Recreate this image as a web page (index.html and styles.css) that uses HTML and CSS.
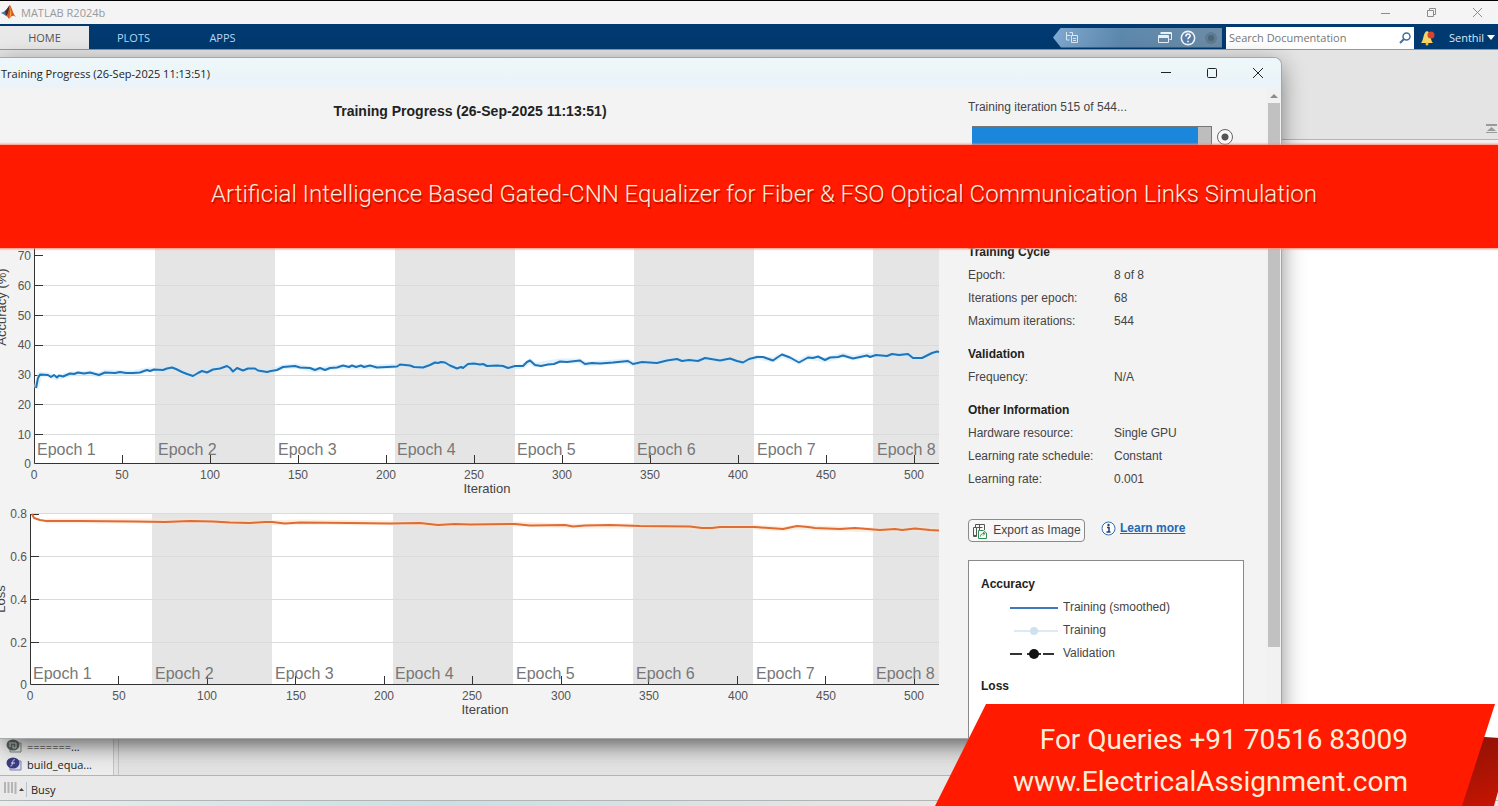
FILE: index.html
```
<!DOCTYPE html>
<html lang="en">
<head>
	<meta charset="utf-8">
	<title>MATLAB R2024b</title>
	<link rel="stylesheet" href="styles.css">
</head>
<body>
	<header class="app-title">
		<svg class="logo" width="15" height="14" viewBox="0 0 15 14">
			<path d="M0 8 L4 6 L7 3 L8 8 L5 11 L3 9.500 Z" fill="#3d7aa8"/>
			<path d="M4 6 C6 5 7 1 9 0 L7 9 L5 11 Z" fill="#5b2a1c"/>
			<path d="M9 0 C11 3 12 9 15 12 C12 10 11 10 8 14 C7 12 6 11 5 11 C8 9 8 3 9 0 Z" fill="#d9531e"/>
			<path d="M9 1 C10 5 9 9 8 13 L10 11 C11 8 10 4 9 1 Z" fill="#f4a73a"/>
		</svg>
		<span class="app-name">MATLAB R2024b</span>
		<div class="win-buttons faded">
			<button aria-label="Minimize"><svg width="12" height="12"><path d="M1 6.500h9"/></svg></button>
			<button aria-label="Restore"><svg width="12" height="12"><path d="M1.500 3.500h6v6h-6zM3.500 3.500v-2h6v6h-2"/></svg></button>
			<button aria-label="Close"><svg width="12" height="12"><path d="M1 1l9 9M10 1l-9 9"/></svg></button>
		</div>
	</header>

	<nav class="toolstrip">
		<a class="tab active" href="#home">HOME</a>
		<a class="tab" href="#plots">PLOTS</a>
		<a class="tab" href="#apps">APPS</a>
		<div class="quick">
			<svg width="14" height="14" viewBox="0 0 14 14" fill="none" stroke="#dbe6ee"><path d="M1.500 1v8h3M1.500 4.500h4M4.500 1.500h3v3M6.500 4.500h6v7h-6zM8 7.500h3M8 9.500h3"/></svg>
			<svg class="push" width="15" height="14" viewBox="0 0 15 14" fill="none" stroke="#e8eff5"><path d="M3.500 1.500h11v7h-2M3.500 2.500h11M1.500 4.500h10v7h-10z"/><path d="M2 6h9" stroke-width="2"/></svg>
			<svg width="16" height="16" viewBox="0 0 15 15"><circle cx="7.500" cy="7.500" r="7" fill="#eef3f8"/><circle cx="7.500" cy="7.500" r="5.500" fill="#5a7fa8"/><path d="M5.500 6c0-3 4-3 4-.5c0 1.500-2 1.500-2 3.200M7.500 10v1.500" fill="none" stroke="#fff" stroke-width="1.500"/></svg>
			<svg width="14" height="14" viewBox="0 0 14 14"><circle cx="7" cy="7" r="6" fill="#5f7b90"/><circle cx="7" cy="7" r="3" fill="#4c667b"/></svg>
		</div>
		<div class="search">
			<input type="text" placeholder="Search Documentation" aria-label="Search Documentation">
			<svg width="12" height="12" viewBox="0 0 12 12" fill="none" stroke="#3f6f9f"><circle cx="7.500" cy="4.500" r="3.500" stroke-width="1.500"/><path d="M5 7L1 11" stroke-width="2"/></svg>
		</div>
		<svg class="bell" width="14" height="16" viewBox="0 0 14 16"><path d="M0 13C3 10 2 2 6 1C10 2 9 10 12 13Z" fill="#f6d365"/><circle cx="6" cy="14" r="1.500" fill="#e8b93e"/><circle cx="10" cy="5" r="3.500" fill="#d8452c"/></svg>
		<button class="user">Senthil <svg width="8" height="5"><path d="M0 0h8L4 5z" fill="#fff"/></svg></button>
	</nav>

	<div class="strip-body">
		<svg width="11" height="10" viewBox="0 0 11 10"><path d="M0 0h11v2H0zM5.500 3L10 7H1zM0 8h11v1H0z" fill="#9a9a9a"/></svg>
	</div>
	<div class="path-bar"></div>
	<main class="editor"></main>

	<section class="bottom-panel">
		<ul class="history">
			<li><svg width="16" height="14" viewBox="0 0 16 14"><path d="M7 4h8v9H4v-3" fill="#dfe3df" stroke="#7d8a84"/><ellipse cx="7" cy="6" rx="6.500" ry="5.500" fill="#59635f"/><path d="M4 3v5M5 4h5v5H7V6" fill="none" stroke="#c2cac6"/></svg>=======...</li>
			<li><svg width="16" height="14" viewBox="0 0 16 14"><path d="M7 4h8v9H4v-3" fill="#d8d9ee" stroke="#7f80b4"/><ellipse cx="7" cy="6" rx="6.500" ry="5.500" fill="#3c3d80"/><path d="M9 3c-2-1-2 1-2.500 3S6 9 4.500 9M5 6h4" fill="none" stroke="#dcdcf5"/></svg>build_equa...</li>
		</ul>
		<div class="command"></div>
	</section>
	<footer class="status">
		<svg width="20" height="14" viewBox="0 0 20 14"><path d="M1 0v11M4.500 0v11M8 0v11M11.500 0v12" stroke="#b4b4b4" stroke-width="2"/><path d="M15 9h5l-2.500-3z" fill="#444"/></svg>
		<span class="busy">Busy</span>
	</footer>
	<div class="taskbar"></div>

	<!-- training progress window -->
	<section class="dialog">
		<header class="dialog-title">
			<span>Training Progress (26-Sep-2025 11:13:51)</span>
			<div class="win-buttons">
				<button aria-label="Minimize"><svg width="12" height="12"><path d="M1 5.500h10"/></svg></button>
				<button aria-label="Maximize"><svg width="12" height="12"><rect x="1.500" y="1.500" width="9" height="9" rx="1"/></svg></button>
				<button aria-label="Close"><svg width="12" height="12"><path d="M1 1l10 10M11 1L1 11"/></svg></button>
			</div>
		</header>
		<div class="dialog-body">
			<div class="charts">
				<h1>Training Progress (26-Sep-2025 11:13:51)</h1>
				<svg class="chart" viewBox="0 125 940 375">
					<rect class="plot" x="35" y="166" width="904" height="298"/>
					<path class="band" d="M155 166h120v298H155zM395 166h120v298H395zM634 166h120v298H634zM873 166h66v298H873z"/>
					<path class="grid" d="M35 285.500H939M35 315.500H939M35 345.500H939M35 375.500H939M35 404.500H939M35 434.500H939"/>
					<path class="axis" d="M34.500 166V463.500H939M35 255.500h8M35 285.500h8M35 315.500h8M35 345.500h8M35 375.500h8M35 404.500h8M35 434.500h8M122.500 455v8M210.500 455v8M298.500 455v8M386.500 455v8M474.500 455v8M562.500 455v8M650.500 455v8M738.500 455v8M826.500 455v8M914.500 455v8"/>
					<g class="epoch">
						<text x="37" y="455">Epoch 1</text>
						<text x="158" y="455">Epoch 2</text>
						<text x="278" y="455">Epoch 3</text>
						<text x="397" y="455">Epoch 4</text>
						<text x="517" y="455">Epoch 5</text>
						<text x="637" y="455">Epoch 6</text>
						<text x="757" y="455">Epoch 7</text>
						<text x="877" y="455">Epoch 8</text>
					</g>
					<g class="ytick">
						<text x="31" y="260">70</text>
						<text x="31" y="290">60</text>
						<text x="31" y="320">50</text>
						<text x="31" y="349">40</text>
						<text x="31" y="379">30</text>
						<text x="31" y="409">20</text>
						<text x="31" y="439">10</text>
						<text x="31" y="468">0</text>
					</g>
					<g class="xtick">
						<text x="34" y="479">0</text>
						<text x="122" y="479">50</text>
						<text x="210" y="479">100</text>
						<text x="298" y="479">150</text>
						<text x="386" y="479">200</text>
						<text x="474" y="479">250</text>
						<text x="562" y="479">300</text>
						<text x="650" y="479">350</text>
						<text x="738" y="479">400</text>
						<text x="826" y="479">450</text>
						<text x="914" y="479">500</text>
					</g>
					<text class="label" x="487" y="493">Iteration</text>
					<text class="label" transform="translate(6 307) rotate(-90)">Accuracy (%)</text>
					<polyline class="halo acc-raw" points="36,388 40,374 48,375 57,378 63,376 70,374 90,373 99,375 105,372 133,373 147,370 163,370 172,367 182,372 193,376 202,371 227,366 233,371 248,368 267,372 283,367 295,366 315,370 337,367 377,367 397,366 410,365 423,367 435,362 445,362 457,368 468,364 497,365 508,368 523,366 530,361 535,365 560,361 580,361 585,364 628,361 633,364 677,359 698,361 705,358 720,360 743,362 757,357 773,360 782,355 799,362 808,357 825,360 843,355 853,358 867,355 887,356 908,354 913,358 922,358 939,352"/>
					<polyline class="line acc" points="36,388 38,378 40,374.500 48,375 51,377 54,375 57,377.500 59,375.500 63,376.500 70,373.500 74,374 78,372.500 84,373.500 90,372.500 99,375 105,372.500 115,373 120,372 126,373 133,373 140,372.500 144,371 147,370 150,371 154,369.500 163,370 167,368.500 172,367.500 176,369 182,372 187,374 193,376 198,373 202,371 207,372.500 213,369.500 220,368.500 227,366 230,368 233,371.500 237,368 243,370.500 248,368.500 255,368.500 258,370.500 267,372 271,371 277,370 283,367 295,366 300,367.500 310,368 315,370 320,368 325,370 330,368 337,367.500 343,365.500 349,367 352,365.500 356,367 361,365.500 364,367 370,365.500 377,367.500 387,367 397,366.500 400,364.500 410,365.500 414,367 423,367.500 430,365 435,362.500 438,363 441,362 445,362.500 450,365.500 457,368.500 461,367 463,368 468,364 474,363.500 480,364.500 483,364 487,366 497,365.500 503,366 508,368 515,366 523,366 527,362 530,360.500 535,365 541,366 548,364.500 554,364 560,361.500 567,362 580,360.500 585,364 592,363 600,363.500 613,362.500 628,361 633,364 642,362 657,363 667,360.500 677,359 682,361 689,360 698,361 705,358 711,359 720,360.500 730,358.500 737,361 743,362.500 749,359 757,357 763,357 773,360.500 778,357 782,354.500 790,357.500 799,362.500 808,357.500 813,358 818,356.500 825,360 830,357.500 838,357 843,355.500 853,358.500 860,357 867,355.500 870,357 876,355 887,356 892,354 899,355 908,354 913,358 922,358 928,355 932,353 937,351.500 939,352"/>
				</svg>
				<svg class="chart" viewBox="0 500 940 238">
					<rect class="plot" x="31" y="514" width="908" height="171"/>
					<path class="band" d="M152 514h120v171H152zM393 514h120v171H393zM633 514h120v171H633zM873 514h66v171H873z"/>
					<path class="grid" d="M31 513.500H939M31 556.500H939M31 599.500H939M31 642.500H939"/>
					<path class="axis" d="M30.500 514V684.500H939M31 514.500h8M31 556.500h8M31 599.500h8M31 642.500h8M118.500 676v8M207.500 676v8M295.500 676v8M384.500 676v8M472.500 676v8M561.500 676v8M648.500 676v8M737.500 676v8M825.500 676v8M914.500 676v8"/>
					<g class="epoch">
						<text x="33" y="679">Epoch 1</text>
						<text x="155" y="679">Epoch 2</text>
						<text x="275" y="679">Epoch 3</text>
						<text x="395" y="679">Epoch 4</text>
						<text x="516" y="679">Epoch 5</text>
						<text x="636" y="679">Epoch 6</text>
						<text x="756" y="679">Epoch 7</text>
						<text x="876" y="679">Epoch 8</text>
					</g>
					<g class="ytick">
						<text x="27" y="518">0.8</text>
						<text x="27" y="561">0.6</text>
						<text x="27" y="604">0.4</text>
						<text x="27" y="647">0.2</text>
						<text x="27" y="689">0</text>
					</g>
					<g class="xtick">
						<text x="30" y="700">0</text>
						<text x="119" y="700">50</text>
						<text x="207" y="700">100</text>
						<text x="296" y="700">150</text>
						<text x="384" y="700">200</text>
						<text x="472" y="700">250</text>
						<text x="561" y="700">300</text>
						<text x="649" y="700">350</text>
						<text x="738" y="700">400</text>
						<text x="826" y="700">450</text>
						<text x="914" y="700">500</text>
					</g>
					<text class="label" x="485" y="714">Iteration</text>
					<text class="label" transform="translate(5 599) rotate(-90)">Loss</text>
					<polyline class="halo loss-raw" points="46,521 135,521 190,521 250,523 300,522 390,523 438,525 515,524 573,526 640,526 707,528 755,527 783,529 797,527 840,529 880,530 915,529 939,530"/>
					<polyline class="line loss" points="32,514 34,518 40,520 46,521 80,521 135,521.500 165,522 190,521 213,521.500 230,522.500 250,523 265,522 272,522 285,523.500 300,522.500 350,523 390,523.500 420,523 438,525 455,524 470,524.500 515,524 530,525.500 565,525 573,526.500 585,525.500 610,525 640,526 690,526.500 702,528 712,528 720,527 755,527 783,529 797,526 808,527 815,528 840,529 855,528 880,530 895,529 902,530 915,528.500 930,530 939,530.500"/>
				</svg>
			</div>

			<aside class="side">
				<label class="iteration" for="train-progress">Training iteration 515 of 544...</label>
				<div class="progress-row">
					<progress id="train-progress" value="515" max="544"></progress>
					<button class="stop" aria-label="Stop training"></button>
				</div>
				<table class="info">
					<tr><th colspan="2">Training Cycle</th></tr>
					<tr><td>Epoch:</td><td>8 of 8</td></tr>
					<tr><td>Iterations per epoch:</td><td>68</td></tr>
					<tr><td>Maximum iterations:</td><td>544</td></tr>
					<tr class="section"><th colspan="2">Validation</th></tr>
					<tr><td>Frequency:</td><td>N/A</td></tr>
					<tr class="section"><th colspan="2">Other Information</th></tr>
					<tr><td>Hardware resource:</td><td>Single GPU</td></tr>
					<tr><td>Learning rate schedule:</td><td>Constant</td></tr>
					<tr><td>Learning rate:</td><td>0.001</td></tr>
				</table>
				<div class="actions">
					<button class="export"><svg width="16" height="16" viewBox="0 0 16 16" fill="none" stroke="#555"><path d="M1.500 4.500h3v9h-3zM3.500 4V1.500h9V7M5 12.500H1.500M4.500 4.500h6M7.500 2v5"/><path d="M6.500 7.500h5l3 2.500v5.500h-8z" stroke="#2f8f4a" fill="#fff"/><path d="M8.500 13.500c0-2 1-3 4-3M11 9l2 1.500l-2 2" stroke="#2f8f4a"/></svg>Export as Image</button>
					<a class="learn" href="#learn"><svg width="15" height="15" viewBox="0 0 15 15"><circle cx="7.500" cy="7.500" r="6.500" fill="#fff" stroke="#2f6fb5"/><circle cx="7.500" cy="4" r="1.200" fill="#233f66"/><path d="M6 6.500h2V11M5.500 11h4" fill="none" stroke="#233f66" stroke-width="1.500"/></svg><span>Learn more</span></a>
				</div>
				<div class="legend">
					<h2>Accuracy</h2>
					<ul>
						<li><svg width="48" height="12"><path d="M0 6h48" stroke="#3f78bd" stroke-width="2"/></svg>Training (smoothed)</li>
						<li><svg width="48" height="12"><path d="M4 6h44" stroke="#dde9f3" stroke-width="2"/><circle cx="24" cy="6" r="4" fill="#cfe1f1"/></svg>Training</li>
						<li><svg width="48" height="12"><path d="M0 6h12M33 6h11M17 6h14" stroke="#333" stroke-width="2"/><circle cx="24" cy="6" r="5" fill="#111"/></svg>Validation</li>
					</ul>
					<h2>Loss</h2>
				</div>
			</aside>
			<div class="scrollbar"><div class="thumb"></div></div>
		</div>
	</section>

	<div class="banner">Artificial Intelligence Based Gated-CNN Equalizer for Fiber &amp; FSO Optical Communication Links Simulation</div>

	<div class="ribbon-fold"></div>
	<div class="ribbon">
		<p>For Queries +91 70516 83009</p>
		<p>www.ElectricalAssignment.com</p>
	</div>
</body>
</html>
```
FILE: styles.css
```
* {
	box-sizing: border-box;
}

body {
	margin: 0;
	min-height: 100vh;
	display: flex;
	flex-direction: column;
	position: relative;
	overflow: hidden;
	font-family: "Open Sans", "Noto Sans", sans-serif;
	font-size: 11px;
	color: #222;
	background: #e4e4e4;
}

button {
	border: 0;
	padding: 0;
	background: none;
	font: inherit;
	color: inherit;
}

ul, p, h1, h2 {
	margin: 0;
	padding: 0;
	list-style: none;
}

/* main window */

.app-title {
	height: 24px;
	display: flex;
	align-items: center;
	background: #f4f4f5;
	border-top: 1px solid #000;
	color: #999;
}

.logo {
	margin: 0 5px 2px 1px;
}

.win-buttons {
	margin-left: auto;
	display: flex;
}

.win-buttons button {
	width: 46px;
	height: 22px;
}

.win-buttons svg {
	display: block;
	margin: 0 auto;
	fill: none;
	stroke: #222;
}

.faded svg {
	stroke: #8c8c8c;
}

.faded {
	margin-right: -3px;
}

.toolstrip {
	height: 26px;
	padding-top: 2px;
	display: flex;
	align-items: center;
	background: #003a70;
	border-bottom: 1px solid #7f9db8;
	color: #dbe8f5;
}

.tab {
	width: 89px;
	height: 23px;
	line-height: 24px;
	text-align: center;
	color: #b9d6f2;
	text-decoration: none;
}

.tab.active {
	color: #555;
	background: #e9e9e9;
}

.quick {
	margin-left: auto;
	margin-right: 4px;
	width: 169px;
	height: 20px;
	padding: 0 4px 0 12px;
	display: flex;
	align-items: center;
	gap: 8px;
	background: linear-gradient(90deg, #7fa9d0, #5d88ad 40%, #6d8ca6);
	clip-path: polygon(8px 0, 100% 0, 100% 100%, 8px 100%, 0 50%);
}

.push {
	margin-left: auto;
}

.search {
	width: 188px;
	height: 22px;
	padding: 0 3px;
	display: flex;
	align-items: center;
	background: #fff;
}

.search input {
	flex: 1;
	min-width: 0;
	border: 0;
	padding: 0;
	font: inherit;
	background: none;
}

.search input::placeholder {
	color: #777;
}

.bell {
	margin: 0 14px 0 7px;
}

.user {
	padding-right: 3px;
	white-space: nowrap;
}

.user svg {
	margin-bottom: 2px;
}

.strip-body {
	height: 90px;
	display: flex;
	align-items: flex-end;
	justify-content: flex-end;
	padding: 0 1px 5px;
	background: #e4e4e4;
	border-bottom: 1px solid #b5b5b5;
}

.path-bar {
	height: 60px;
	background: #f0f0f0;
}

.editor {
	flex: 1;
	background: #fff;
}

.bottom-panel {
	height: 39px;
	display: flex;
	gap: 4px;
	background: #e2e2e2;
	border-bottom: 1px solid #b4b4b4;
}

.history {
	width: 114px;
	background: #ececec;
	border-right: 1px solid #c4c4c4;
}

.history li {
	height: 18px;
	display: flex;
	align-items: center;
	gap: 5px;
	padding-left: 6px;
}

.command {
	flex: 1;
	border-left: 1px solid #c4c4c4;
}

.status {
	height: 25px;
	display: flex;
	align-items: center;
	padding: 2px 0 0 4px;
	background: #e9e9e9;
	border-bottom: 1px solid #b4b4b4;
}

.busy {
	margin-left: 2px;
	padding-left: 4px;
	border-left: 1px solid #b5c4ce;
}

.taskbar {
	height: 5px;
	background: linear-gradient(90deg, #e6eeee, #c8e0e4 30%, #efe9e6 70%);
}

/* training progress window */

.dialog {
	position: absolute;
	left: 0;
	top: 57px;
	width: calc(100% - 216px);
	height: 682px;
	display: flex;
	flex-direction: column;
	overflow: hidden;
	background: #f3f3f3;
	border: solid #a4a8a8;
	border-width: 1px 1px 1px 0;
	border-radius: 0 8px 2px 0;
	box-shadow: 0 6px 24px rgba(0, 0, 0, 0.4), 0 14px 20px -14px rgba(0, 0, 0, 0.4);
}

.dialog-title {
	height: 30px;
	flex: none;
	display: flex;
	align-items: center;
	padding-left: 1px;
	background: linear-gradient(#eef7f8, #e9f3f9);
}

.dialog-body {
	flex: 1;
	min-height: 0;
	display: flex;
	font-family: "Liberation Sans", Arial, sans-serif;
}

.charts {
	flex: 1;
	min-width: 0;
}

.charts h1 {
	height: 37px;
	padding-top: 13px;
	line-height: 20px;
	text-align: center;
	font-size: 14px;
}

.chart {
	display: block;
	width: 100%;
	height: auto;
}

.plot {
	fill: #fff;
}

.band {
	fill: #e5e5e5;
}

.grid {
	stroke: #dadcdc;
}

.axis {
	fill: none;
	stroke: #333;
}

.line {
	fill: none;
	stroke-width: 2;
	stroke-linejoin: round;
}

.halo {
	fill: none;
	stroke-width: 5;
	stroke-linejoin: round;
	opacity: 0.6;
}

.acc {
	stroke: #1f74b8;
}

.acc-raw {
	stroke: #cdeafb;
}

.loss {
	stroke: #dd6c35;
}

.loss-raw {
	stroke: #fde3cc;
}

.epoch {
	font-size: 16px;
	fill: #777;
}

.xtick, .ytick {
	font-size: 12px;
	fill: #555;
}

.ytick {
	text-anchor: end;
}

.xtick, .label {
	text-anchor: middle;
}

.label {
	font-size: 13px;
	fill: #444;
}

.side {
	width: 326px;
	padding: 8px 22px 0 28px;
	font-size: 12px;
	line-height: 23px;
	color: #444;
}

.iteration {
	display: block;
}

.progress-row {
	display: flex;
	gap: 5px;
	align-items: flex-start;
	padding: 7px 0 0 4px;
}

progress {
	appearance: none;
	width: 240px;
	height: 22px;
	border: 1px solid #777;
	border-left: 0;
}

progress::-webkit-progress-bar {
	background: #bdbdbd;
}

progress::-webkit-progress-value {
	background: #1a86dc;
}

.stop {
	width: 16px;
	height: 16px;
	margin-top: 3px;
	border: 1px solid #666;
	border-radius: 50%;
	background: radial-gradient(#555 3px, #fafafa 4px);
}

.info {
	margin-top: 93px;
	border-collapse: collapse;
}

.info th, .info td {
	height: 23px;
	padding: 0;
	text-align: left;
	line-height: 23px;
}

.info th, .legend h2 {
	color: #222;
	font-weight: bold;
	font-size: 12px;
}

.info td:first-child {
	width: 146px;
}

.info .section th {
	padding-top: 10px;
}

.actions {
	display: flex;
	gap: 16px;
	margin-top: 28px;
}

.export {
	width: 117px;
	height: 23px;
	display: flex;
	align-items: center;
	justify-content: center;
	gap: 5px;
	white-space: nowrap;
	border: 1px solid #8a8a8a;
	border-radius: 4px;
	background: #f8f8f8;
}

.learn {
	height: 18px;
	display: flex;
	align-items: center;
	gap: 4px;
	color: #2468b4;
	font-weight: bold;
}

.legend {
	margin-top: 18px;
	height: 230px;
	padding: 12px 12px 0;
	background: #fff;
	border: 1px solid #8a8a8a;
}

.legend li {
	display: flex;
	align-items: center;
	gap: 5px;
	padding-left: 29px;
}

.legend ul {
	margin-bottom: 10px;
}

.scrollbar {
	width: 15px;
	display: flex;
	flex-direction: column;
	align-items: center;
	background: #f1f1f1;
}

.scrollbar::before {
	content: "";
	margin: 6px 0 5px;
	border: solid transparent;
	border-width: 0 4px 4px;
	border-bottom-color: #8c8c8c;
}

.thumb {
	width: 12px;
	height: 544px;
	background: #c1c1c1;
}

/* overlay captions */

.banner, .ribbon {
	font-family: Roboto, sans-serif;
	color: #ffeeda;
	background: #ff1a00;
}

.banner {
	position: absolute;
	left: 0;
	right: 0;
	top: 145px;
	padding: 33px 0 38px 30px;
	line-height: 32px;
	text-align: center;
	font-size: 24px;
	font-weight: 300;
	text-shadow: 1px 2px 1px #b01000;
	box-shadow: 0 0 2px 1px #ff8a74;
}

.ribbon {
	position: absolute;
	right: 0;
	bottom: 0;
	width: 563px;
	height: 102px;
	padding: 15px 90px 0 0;
	line-height: 42px;
	text-align: right;
	font-size: 28px;
	clip-path: polygon(51px 0, 560px 0, 527px 100%, 0 100%);
}

.ribbon-fold {
	position: absolute;
	right: 0;
	bottom: 0;
	width: 40px;
	height: 71px;
	background: linear-gradient(160deg, #8a1206, #c81402);
	clip-path: polygon(0 0, 100% 3px, 100% 80%, 90% 100%, 0 100%);
}
```
